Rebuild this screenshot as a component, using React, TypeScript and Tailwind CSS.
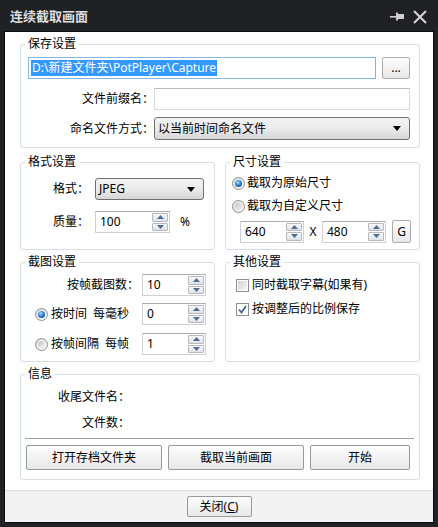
import React from "react";

const FONT = "font-['Noto_Sans','Noto_Sans_CJK_SC',sans-serif]";

function Group({ title, className = "", children }: { title: string; className?: string; children?: React.ReactNode }) {
  return (
    <fieldset className={`border border-[#d5dfe5] rounded-[3px] min-w-0 ${className}`}>
      <legend className="ml-[4px] px-[3px] text-[12px] leading-[14px]">{title}</legend>
      {children}
    </fieldset>
  );
}

function Btn({ className = "", children }: { className?: string; children?: React.ReactNode }) {
  return (
    <div
      className={`flex items-center justify-center border border-[#9a9a9a] rounded-[2px] bg-gradient-to-b from-[#fdfdfd] to-[#e8e8e8] text-[12px] ${className}`}
    >
      {children}
    </div>
  );
}

function Arrow({ up }: { up?: boolean }) {
  return (
    <svg width="7" height="4" viewBox="0 0 7 4">
      <path d={up ? "M0 4 L3.5 0 L7 4 Z" : "M0 0 L3.5 4 L7 0 Z"} fill="#4e6c98" />
    </svg>
  );
}

function Spin({ value, className = "" }: { value: string; className?: string }) {
  return (
    <div className={`flex items-center h-[22px] border border-[#cdd0d5] border-t-[#abadb3] bg-white pl-[4px] pr-[1px] ${className}`}>
      <span className="flex-1 leading-[14px]">{value}</span>
      <div className="flex flex-col gap-[1px] w-[16px] h-[18px]">
        <div className="flex-1 flex items-center justify-center border border-[#b6b9be] rounded-[1px] bg-gradient-to-b from-[#f8f8f8] to-[#dfe2e7]">
          <Arrow up />
        </div>
        <div className="flex-1 flex items-center justify-center border border-[#b6b9be] rounded-[1px] bg-gradient-to-b from-[#f8f8f8] to-[#dfe2e7]">
          <Arrow />
        </div>
      </div>
    </div>
  );
}

function Combo({ text, className = "" }: { text: string; className?: string }) {
  return (
    <div
      className={`flex items-center border border-[#707070] rounded-[3px] bg-gradient-to-b from-[#f3f3f3] via-[#ebebeb] to-[#d6d6d6] pl-[3px] pr-[8px] ${className}`}
    >
      <span className="flex-1 leading-[14px]">{text}</span>
      <svg width="8" height="5" viewBox="0 0 8 5">
        <path d="M0 0 L8 0 L4 5 Z" fill="#000" />
      </svg>
    </div>
  );
}

function Radio({ on }: { on?: boolean }) {
  return (
    <span className="w-[13px] h-[13px] shrink-0 rounded-full border border-[#8e8f8f] bg-gradient-to-br from-[#dcdcdc] to-[#fbfbfb] flex items-center justify-center">
      {on ? (
        <span className="w-[7px] h-[7px] rounded-full bg-[radial-gradient(circle_at_40%_35%,#a8dcff,#1f72c4_55%,#0b3b74)]" />
      ) : (
        <span className="w-[7px] h-[7px] rounded-full bg-gradient-to-br from-[#c4c4c4] to-[#f2f2f2]" />
      )}
    </span>
  );
}

function Check({ on }: { on?: boolean }) {
  return (
    <span className="w-[13px] h-[13px] shrink-0 border border-[#8f8f8f] bg-white flex items-center justify-center">
      {on ? (
        <svg width="9" height="9" viewBox="0 0 9 9">
          <path d="M1 4.5 L3.5 7.5 L8 1" stroke="#4a5f97" strokeWidth="1.8" fill="none" />
        </svg>
      ) : (
        <span className="w-[9px] h-[9px] bg-gradient-to-br from-[#d4d4d4] to-[#f6f6f6]" />
      )}
    </span>
  );
}

export default function App() {
  return (
    <div className={`w-[438px] h-[527px] bg-[#202124] flex flex-col text-[12px] text-black ${FONT}`}>
      {/* title bar */}
      <div className="h-[31px] flex items-center pl-[10px] pr-[11px] pt-[2px]">
        <span className="flex-1 text-[13px] font-bold text-[#dedede] leading-none">连续截取画面</span>
        <svg width="14" height="9" viewBox="0 0 14 9" className="mr-[9px]">
          <rect x="0" y="4" width="6" height="1.6" fill="#cfcfcf" />
          <rect x="6" y="0.5" width="2" height="8" fill="#cfcfcf" />
          <rect x="8" y="2" width="6" height="5" fill="#cfcfcf" />
        </svg>
        <svg width="14" height="14" viewBox="0 0 14 14">
          <path d="M1 1 L13 13 M13 1 L1 13" stroke="#d6d6d6" strokeWidth="2" />
        </svg>
      </div>

      {/* body */}
      <div className="flex-1 mx-[4px] mb-[4px] border border-[#0b0b0b] bg-white flex flex-col">
        <div className="flex-1 pl-[15px] pr-[13px] pt-[5px] flex flex-col">
          <Group title="保存设置" className="h-[111px]">
            <div className="pl-[7px] pt-[6px]">
              <div className="flex items-center">
                <div className="w-[348px] h-[22px] border border-[#86b5e2] flex items-center pl-[2px]">
                  <span className="bg-[#3399ff] text-white leading-[16px] px-[1px]">{"D:\\新建文件夹\\PotPlayer\\Capture"}</span>
                </div>
                <Btn className="ml-[6px] w-[28px] h-[22px] border-[#acacac]">...</Btn>
              </div>
              <div className="flex items-center mt-[9px]">
                <span className="w-[126px] text-right">文件前缀名：</span>
                <div className="w-[256px] h-[22px] border border-[#d7dade] border-t-[#b8bbc0] bg-white" />
              </div>
              <div className="flex items-center mt-[7px]">
                <span className="w-[126px] text-right">命名文件方式：</span>
                <Combo text="以当前时间命名文件" className="w-[256px] h-[23px]" />
              </div>
            </div>
          </Group>

          <div className="grid grid-cols-2 gap-[10px] mt-[7px]">
            <Group title="格式设置" className="h-[95px]">
              <div className="pt-[9px]">
                <div className="flex items-center">
                  <span className="w-[74px] text-right pr-[6px]">格式：</span>
                  <Combo text="JPEG" className="w-[109px] h-[22px]" />
                </div>
                <div className="flex items-center mt-[11px]">
                  <span className="w-[74px] text-right pr-[6px]">质量：</span>
                  <Spin value="100" className="w-[75px]" />
                  <span className="ml-[10px]">%</span>
                </div>
              </div>
            </Group>
            <Group title="尺寸设置" className="h-[95px]">
              <div className="pl-[6px] pt-[6px]">
                <div className="flex items-center h-[16px] gap-[2px]">
                  <Radio on />
                  <span>截取为原始尺寸</span>
                </div>
                <div className="flex items-center h-[16px] gap-[2px] mt-[7px]">
                  <Radio />
                  <span>截取为自定义尺寸</span>
                </div>
                <div className="flex items-center mt-[6px] pl-[8px]">
                  <Spin value="640" className="w-[64px]" />
                  <span className="w-[18px] text-center">X</span>
                  <Spin value="480" className="w-[64px]" />
                  <Btn className="ml-[6px] w-[19px] h-[23px] border-[#acacac]">G</Btn>
                </div>
              </div>
            </Group>
          </div>

          <div className="grid grid-cols-2 gap-[10px] mt-[5px]">
            <Group title="截图设置" className="h-[107px]">
              <div className="pt-[5px] pr-[8px]">
                <div className="flex items-center">
                  <span className="flex-1 text-right pr-[3px]">按帧截图数：</span>
                  <Spin value="10" className="w-[64px]" />
                </div>
                <div className="flex items-center mt-[7px] pl-[14px]">
                  <Radio on />
                  <span className="ml-[3px]">按时间</span>
                  <span className="flex-1 text-right pr-[13px]">每毫秒</span>
                  <Spin value="0" className="w-[64px]" />
                </div>
                <div className="flex items-center mt-[8px] pl-[14px]">
                  <Radio />
                  <span className="ml-[3px]">按帧间隔</span>
                  <span className="flex-1 text-right pr-[13px]">每帧</span>
                  <Spin value="1" className="w-[64px]" />
                </div>
              </div>
            </Group>
            <Group title="其他设置" className="h-[107px]">
              <div className="pl-[10px] pt-[8px]">
                <div className="flex items-center h-[16px] gap-[3px]">
                  <Check />
                  <span>同时截取字幕(如果有)</span>
                </div>
                <div className="flex items-center h-[16px] gap-[3px] mt-[8px]">
                  <Check on />
                  <span>按调整后的比例保存</span>
                </div>
              </div>
            </Group>
          </div>

          <Group title="信息" className="h-[113px] mt-[5px]">
            <div className="pt-[9px]">
              <div className="flex h-[14px] items-center">
                <span className="w-[109px] text-right">收尾文件名：</span>
              </div>
              <div className="flex h-[14px] items-center mt-[12px]">
                <span className="w-[109px] text-right">文件数：</span>
              </div>
              <div className="mt-[8px] ml-[4px] mr-[5px] h-px bg-[#a0a0a0]" />
              <div className="flex gap-[6px] mt-[6px] pl-[5px]">
                <Btn className="w-[136px] h-[25px]">打开存档文件夹</Btn>
                <Btn className="w-[136px] h-[25px]">截取当前画面</Btn>
                <Btn className="w-[100px] h-[25px]">开始</Btn>
              </div>
            </div>
          </Group>
        </div>

        {/* footer */}
        <div className="h-[32px] border-t border-[#dcdcdc] bg-[#f3f3f3] flex items-center justify-center">
          <Btn className="w-[65px] h-[21px] border-[#8c8c8c]">
            关闭(<span className="underline">C</span>)
          </Btn>
        </div>
      </div>
    </div>
  );
}
